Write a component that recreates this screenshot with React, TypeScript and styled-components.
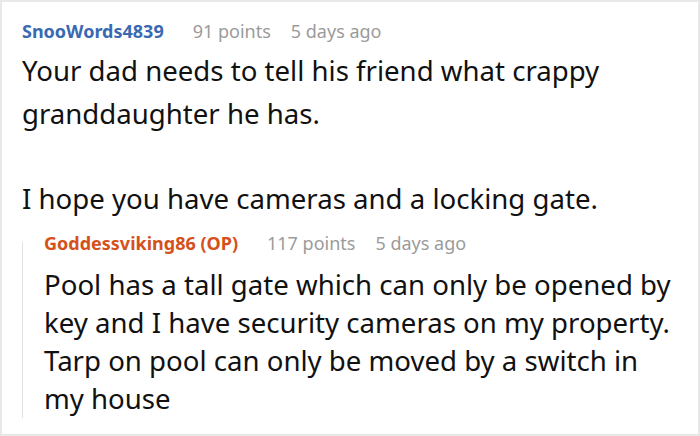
import React from "react";
import styled, { createGlobalStyle } from "styled-components";

const Global = createGlobalStyle`
  html, body { margin: 0; padding: 0; background: #fff; }
  body { font-family: "Noto Sans", "Open Sans", sans-serif; }
  * { box-sizing: border-box; }
`;

const Card = styled.div`
  width: 700px;
  height: 436px;
  border: 2px solid #e8e8e8;
  background: #fff;
  padding: 10px 18px 0 20px;
  overflow: hidden;
`;

const Comment = styled.div`
  display: flex;
  flex-direction: column;
`;

const Meta = styled.div`
  display: flex;
  align-items: center;
  gap: 20px;
  height: 37px;
  white-space: nowrap;
`;

const Author = styled.span<{ $op?: boolean }>`
  font-weight: 700;
  font-size: 18px;
  margin-right: 9px;
  color: ${(p) => (p.$op ? "#d4511b" : "#3a69b3")};
`;

const Info = styled.span`
  font-size: 18px;
  color: #9b9b9b;
`;

const Body = styled.div<{ $lh: number; $top?: number }>`
  font-size: 27.6px;
  line-height: ${(p) => p.$lh}px;
  margin-top: ${(p) => p.$top ?? 0}px;
  color: #111;
  p { margin: 0; }
`;

const Gap = styled.div<{ $h: number }>`
  height: ${(p) => p.$h}px;
`;

const Reply = styled.div`
  position: relative;
  margin-top: 5px;
  padding-left: 22px;
  display: flex;
  flex-direction: column;
  &::before {
    content: "";
    position: absolute;
    left: 0;
    top: 18px;
    bottom: -1px;
    width: 1px;
    background: #e2e2e2;
  }
`;

export default function App() {
  return (
    <>
      <Global />
      <Card>
        <Comment>
          <Meta>
            <Author>SnooWords4839</Author>
            <Info>91 points</Info>
            <Info>5 days ago</Info>
          </Meta>
          <Body $lh={42.5}>
            <p>Your dad needs to tell his friend what crappy granddaughter he has.</p>
            <Gap $h={42.5} />
            <p>I hope you have cameras and a locking gate.</p>
          </Body>
          <Reply>
            <Meta>
              <Author $op>Goddessviking86 (OP)</Author>
              <Info>117 points</Info>
              <Info>5 days ago</Info>
            </Meta>
            <Body $lh={38} $top={4}>
              <p>
                Pool has a tall gate which can only be opened by key and I have security cameras on my
                property. Tarp on pool can only be moved by a switch in my house
              </p>
            </Body>
          </Reply>
        </Comment>
      </Card>
    </>
  );
}
